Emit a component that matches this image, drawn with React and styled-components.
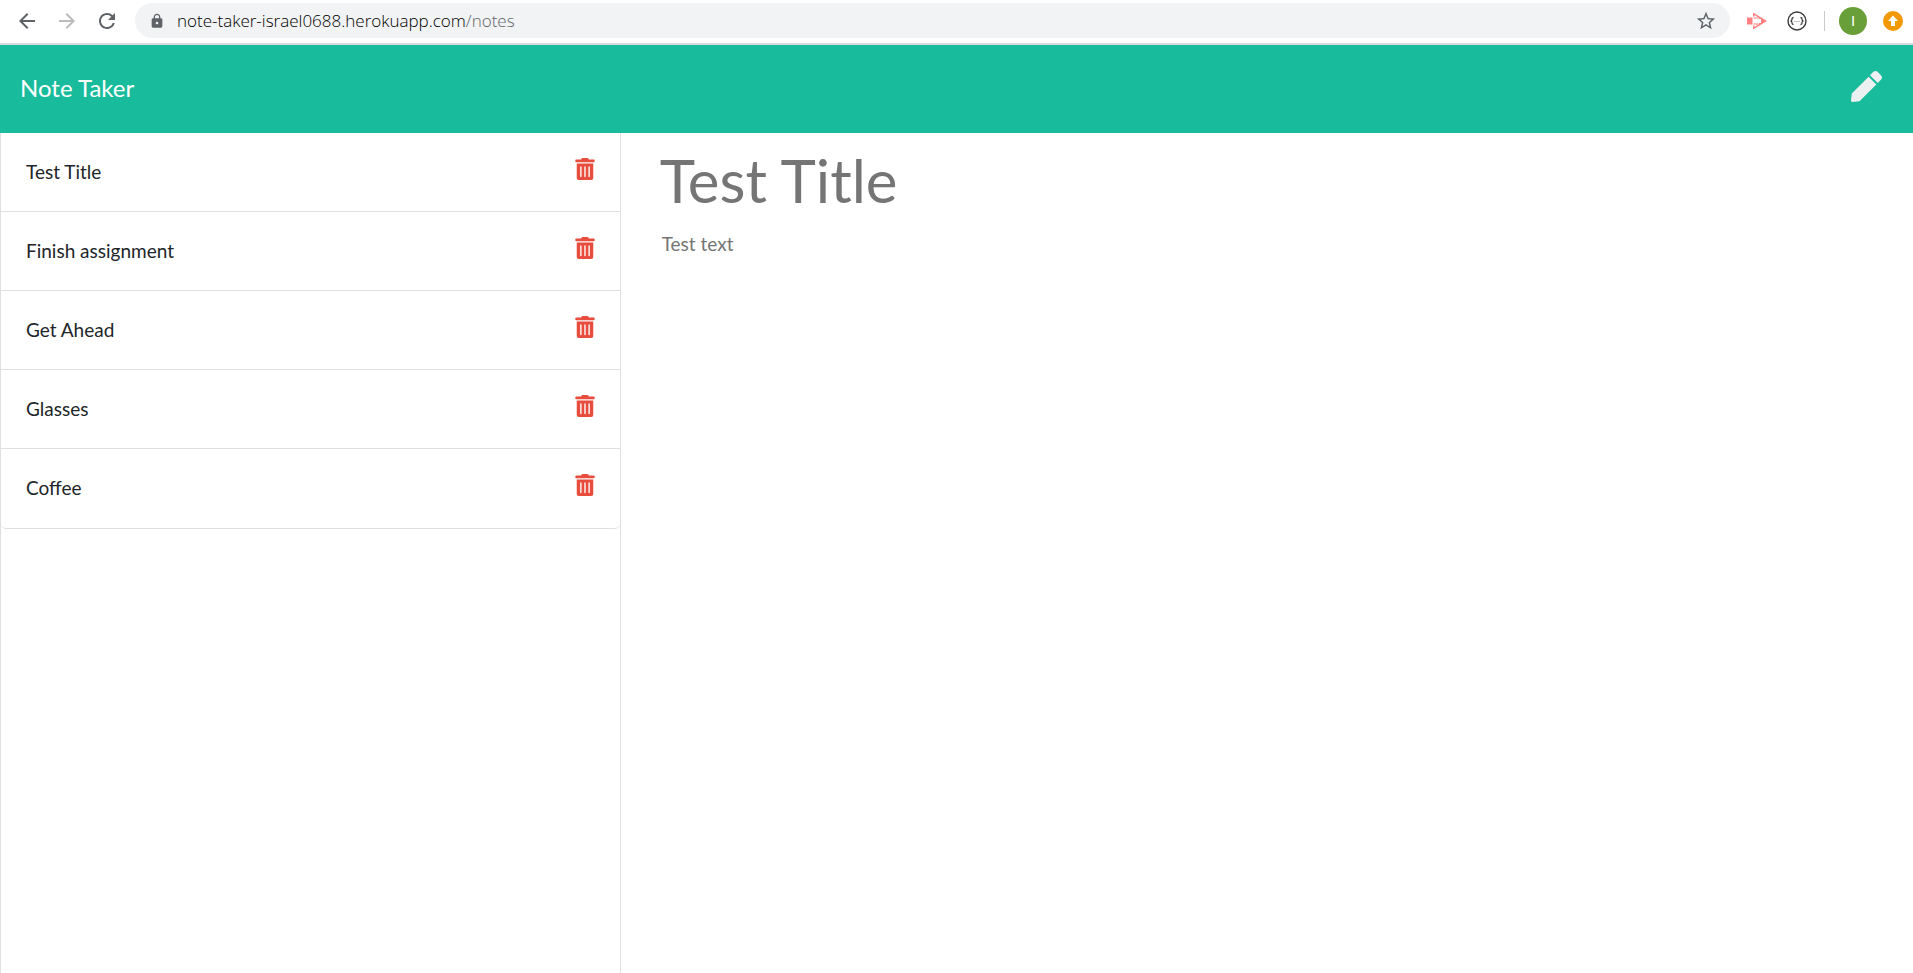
import React from "react";
import styled, { createGlobalStyle } from "styled-components";
import { FaPen, FaTrashAlt } from "react-icons/fa";
import { MdArrowBack, MdArrowForward, MdRefresh, MdLock, MdStarBorder } from "react-icons/md";

const GlobalStyle = createGlobalStyle`
  * { box-sizing: border-box; }
  html, body, #root { height: 100%; }
  body { margin: 0; background: #fff; color: #212529; font: 19px/30px Lato, sans-serif; }
  button { padding: 0; border: 0; background: none; font: inherit; color: inherit; cursor: pointer; }
  svg { display: block; }
`;

const Page = styled.div`
  display: flex;
  flex-direction: column;
  min-height: 100%;
`;

const BrowserBar = styled.div`
  display: flex;
  align-items: center;
  height: 45px;
  padding: 0 10px 2px 15px;
  border-bottom: 2px solid #d9dbe0;
`;

const BarButton = styled.button`
  display: flex;
  align-items: center;
  justify-content: center;
  width: 24px;
  height: 24px;
  margin-right: 16px;
  color: ${(p) => (p.$faded ? "#bbbcbe" : "#5f6368")};
`;

const AddressBox = styled.div`
  display: flex;
  flex: 1;
  align-items: center;
  height: 35px;
  padding: 0 13px 0 14px;
  border-radius: 18px;
  background: #f1f3f4;
  color: #5f6368;
`;

const Address = styled.a`
  flex: 1;
  margin-left: 12px;
  color: #5f6368;
  font: 300 17px/24px "Open Sans", sans-serif;
  text-decoration: none;
`;

const Host = styled.span`
  color: #000;
`;

const Extensions = styled.div`
  display: flex;
  align-items: center;
  margin-left: 17px;
`;

const ExtensionButton = styled.button`
  display: flex;
  margin-right: 20px;
`;

const Divider = styled.span`
  width: 1px;
  height: 20px;
  margin: 0 14px 0 -3px;
  background: #c8cacd;
`;

const Avatar = styled.button`
  width: 28px;
  height: 28px;
  margin-right: 16px;
  border-radius: 50%;
  background: #689f38;
  color: #fff;
  font: 15px/28px "Liberation Sans", sans-serif;
`;

const Header = styled.header`
  display: flex;
  align-items: center;
  justify-content: space-between;
  height: 88px;
  padding: 0 31px 2px 20px;
  background: #18bc9c;
`;

const Brand = styled.a`
  color: #fff;
  font-size: 24px;
  line-height: 36px;
  text-decoration: none;
`;

const NewNote = styled.button`
  margin-bottom: 4px;
  color: #ecf0f1;
`;

const Main = styled.main`
  display: grid;
  flex: 1;
  grid-template-columns: 1fr 2fr;
`;

const Sidebar = styled.aside`
  margin-right: 17px;
  border: solid #dfdfdf;
  border-width: 0 1px;
`;

const NoteList = styled.ul`
  margin: 0;
  padding: 0;
  border-bottom: 1px solid #dfdfdf;
  border-radius: 0 0 5px 5px;
  list-style: none;
`;

const NoteItem = styled.li`
  display: flex;
  justify-content: space-between;
  height: 79px;
  padding: 24px 24px 0 25px;

  &:not(:last-child) {
    border-bottom: 1px solid #dfdfdf;
  }
`;

const DeleteButton = styled.button`
  height: 22px;
  margin-top: 1px;
  color: #e74c3c;
`;

const Editor = styled.section`
  display: flex;
  flex-direction: column;
  padding: 11px 20px 0;
`;

const Field = styled.input`
  width: 100%;
  padding: 0 2px;
  border: 0;
  outline: 0;
  color: #757575;
  background: none;
  font: 60px/72px Lato, sans-serif;
`;

const TextField = styled(Field).attrs({ as: "textarea" })`
  flex: 1;
  margin-top: 13px;
  padding: 0 4px;
  font: 19px/30px Lato, sans-serif;
  resize: none;
`;

const notes = ["Test Title", "Finish assignment", "Get Ahead", "Glasses", "Coffee"];

const RecorderIcon = () => (
  <svg width="20" height="18" viewBox="0 0 20 18" fill="#ff8080">
    <path d="M0 5.500h5.500v7H0zM6 .5l14 8.500-14 8.500v-4h1.500V15l4.500-3v-1h2V7h-2V6L7.500 3v1.500H6z" />
    <path d="M6.500 5.500h5v1h-5zM6.500 11.500h5v1h-5z" />
  </svg>
);

const JsonIcon = () => (
  <svg width="20" height="20" viewBox="0 0 20 20" fill="none" stroke="#3c3c3c">
    <circle cx="10" cy="10" r="9" strokeWidth="1.4" />
    <path d="M6.500 6.500q-1.500 0-1.500 1.500t-1 2q1 .5 1 2t1.500 1.500M13.500 6.500q1.500 0 1.500 1.500t1 2q-1 .5-1 2t-1.500 1.500" strokeWidth="1.300" />
    <path d="M7.500 10.500h1M9.500 10.500h1M11.500 10.500h1" stroke="#8a8a8a" />
  </svg>
);

const UpdateIcon = () => (
  <svg width="20" height="20" viewBox="0 0 20 20">
    <circle cx="10" cy="10" r="10" fill="#f29900" />
    <path d="M10 4.500l5 5.500h-3v5H8v-5H5z" fill="#fff" />
  </svg>
);

export default function App() {
  return (
    <Page>
      <GlobalStyle />
      <BrowserBar>
        <BarButton aria-label="Back"><MdArrowBack size={24} /></BarButton>
        <BarButton aria-label="Forward" $faded><MdArrowForward size={24} /></BarButton>
        <BarButton aria-label="Reload"><MdRefresh size={24} /></BarButton>
        <AddressBox>
          <MdLock size={16} />
          <Address href="#notes"><Host>note-taker-israel0688.herokuapp.com</Host>/notes</Address>
          <button aria-label="Bookmark"><MdStarBorder size={22} /></button>
        </AddressBox>
        <Extensions>
          <ExtensionButton aria-label="Recorder"><RecorderIcon /></ExtensionButton>
          <ExtensionButton aria-label="JSON viewer"><JsonIcon /></ExtensionButton>
          <Divider />
          <Avatar aria-label="Profile">I</Avatar>
          <button aria-label="Update"><UpdateIcon /></button>
        </Extensions>
      </BrowserBar>
      <Header>
        <Brand href="#home">Note Taker</Brand>
        <NewNote aria-label="New note"><FaPen size={31} /></NewNote>
      </Header>
      <Main>
        <Sidebar>
          <NoteList>
            {notes.map((title) => (
              <NoteItem key={title}>
                <span>{title}</span>
                <DeleteButton aria-label={`Delete ${title}`}><FaTrashAlt size={22} /></DeleteButton>
              </NoteItem>
            ))}
          </NoteList>
        </Sidebar>
        <Editor>
          <Field aria-label="Note title" defaultValue="Test Title" readOnly />
          <TextField aria-label="Note text" defaultValue="Test text" readOnly />
        </Editor>
      </Main>
    </Page>
  );
}
